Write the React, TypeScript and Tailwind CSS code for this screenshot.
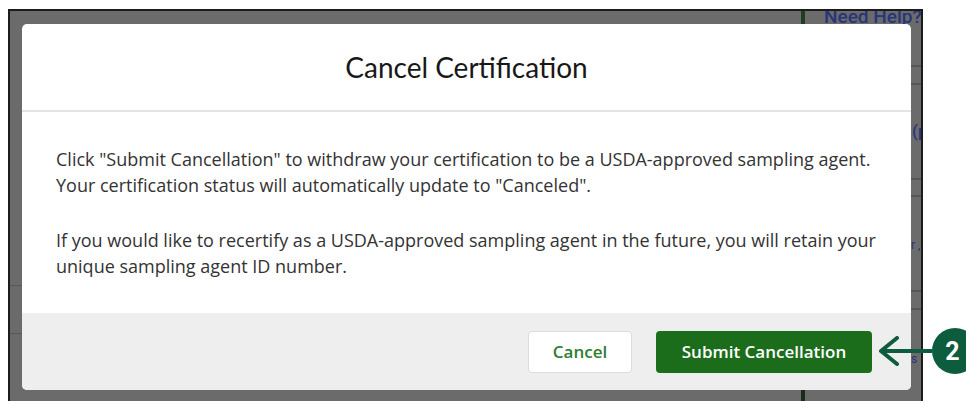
import React from "react";

function StripLine({ className = "" }: { className?: string }) {
  return <div className={`h-[2px] w-full shrink-0 bg-[#525a50] ${className}`} />;
}

function ArrowCallout() {
  return (
    <div className="absolute left-[878px] top-[328px] flex items-center">
      <svg width="54" height="30" viewBox="0 0 54 30" fill="none">
        <line x1="4" y1="15" x2="54" y2="15" stroke="#0d5c3e" strokeWidth="4" />
        <polyline
          points="19,2 3,15 19,28"
          stroke="#0d5c3e"
          strokeWidth="4"
          strokeLinecap="round"
          strokeLinejoin="round"
        />
      </svg>
      <div className="flex h-[46px] w-[46px] shrink-0 items-center justify-center rounded-full bg-[#0d5c3e] pr-[5px] font-['Roboto'] text-[25px] font-bold leading-none text-white">
        2
      </div>
    </div>
  );
}

export default function App() {
  return (
    <div className="relative h-[401px] w-[966px] overflow-hidden bg-white font-['Open_Sans',sans-serif]">
      {/* backdrop over the page */}
      <div className="ml-[8px] mt-[9px] flex h-[400px] w-[915px] flex-col overflow-hidden border-2 border-[#1c1c1c] bg-[#6b6b6b]">
        {/* top band: page header peeking above the dialog */}
        <div className="flex h-[13px] shrink-0 items-start">
          <div className="flex-1" />
          <div className="h-[13px] w-[4px] bg-[#1f3d1f]" />
          <div className="-mt-[5px] ml-[19px] w-[97px] whitespace-nowrap font-['Roboto'] text-[19px] font-medium leading-[22px] text-[#28357a]">
            Need Help?
          </div>
        </div>

        <div className="relative flex h-[366px] shrink-0">
          {/* left page edge */}
          <div className="flex w-[12px] shrink-0 flex-col pt-[261px]">
            <div className="h-[1px] w-full bg-[#575757]" />
            <div className="mt-[47px] h-[1px] w-full bg-[#575757]" />
          </div>

          {/* dialog */}
          <div className="relative flex h-[366px] w-[889px] shrink-0 flex-col overflow-hidden rounded-[5px] bg-white">
            <div className="flex h-[88px] items-center justify-center border-b-2 border-[#e4e4e4]">
              <h2 className="font-['Lato',sans-serif] text-[28px] leading-none text-[#181818]">
                Cancel Certification
              </h2>
            </div>
            <div className="flex-1 px-[34px] pt-[34px] text-[18px] leading-[26px] text-[#333333]">
              <p className="whitespace-nowrap">
                Click "Submit Cancellation" to withdraw your certification to be a USDA-approved sampling agent.
                <br />
                Your certification status will automatically update to "Canceled".
              </p>
              <p className="mt-[29px] whitespace-nowrap">
                If you would like to recertify as a USDA-approved sampling agent in the future, you will retain your
                <br />
                unique sampling agent ID number.
              </p>
            </div>
            <div className="flex h-[77px] items-center justify-end gap-[24px] bg-[#eeeeee] pr-[39px]">
              <button className="flex h-[42px] w-[104px] items-center justify-center rounded-[4px] border border-[#dcdcdc] bg-white text-[17px] font-semibold text-[#2f7d32]">
                Cancel
              </button>
              <button className="flex h-[42px] w-[216px] items-center justify-center rounded-[4px] bg-[#1b6d1c] text-[17px] font-semibold text-white">
                Submit Cancellation
              </button>
            </div>
          </div>

          {/* right page edge */}
          <div className="flex min-w-0 flex-1 flex-col overflow-hidden pt-[41px] font-['Roboto'] text-[#28357a]">
            <StripLine />
            <StripLine className="mt-[16px]" />
            <div className="mt-[36px] h-[20px] pl-[1px] whitespace-nowrap text-[17px] font-medium leading-[20px]">(p</div>
            <StripLine className="mt-[37px]" />
            <StripLine className="mt-[15px]" />
            <div className="mt-[40px] h-[16px] whitespace-nowrap text-[12px] leading-[16px]">r ,</div>
            <StripLine className="mt-[37px]" />
            <StripLine className="mt-[16px]" />
            <div className="mt-[41px] h-[16px] whitespace-nowrap text-[12px] leading-[16px]">s</div>
          </div>
        </div>

        {/* bottom band below the dialog */}
        <div className="flex flex-1">
          <div className="ml-[791px] h-full w-[4px] bg-[#1c2a1c]" />
        </div>
      </div>
      <ArrowCallout />
    </div>
  );
}
